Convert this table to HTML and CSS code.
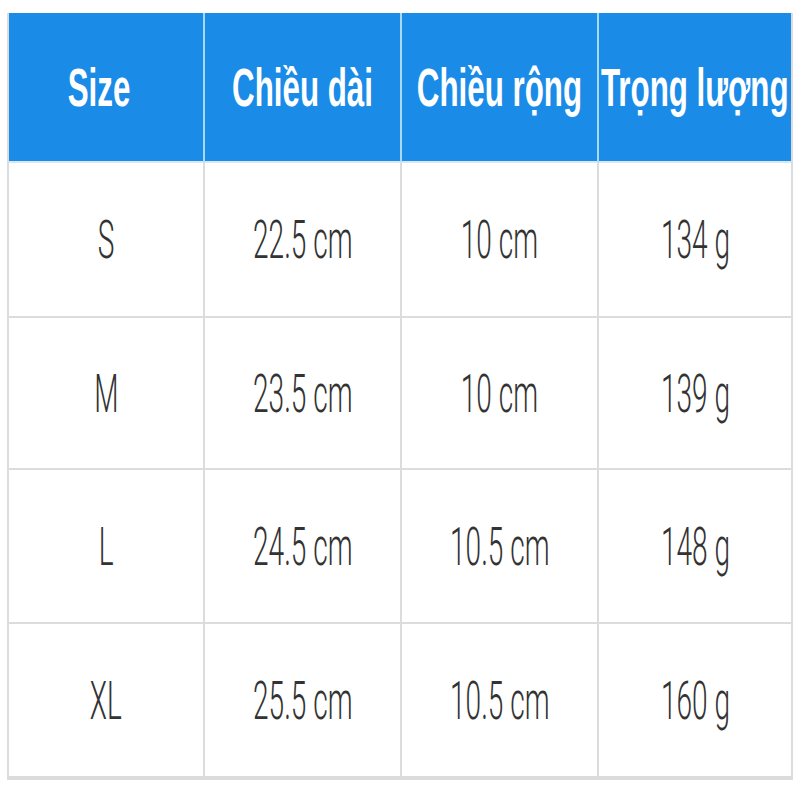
FILE: index.html
```html
<!DOCTYPE html>
<html lang="vi">
<head>
<meta charset="utf-8">
<title>Bảng size</title>
<link rel="stylesheet" href="styles.css">
</head>
<body>
<div class="size-table">
  <div class="cell head first"><span class="txt">Size</span></div>
  <div class="cell head"><span class="txt">Chiều dài</span></div>
  <div class="cell head"><span class="txt">Chiều rộng</span></div>
  <div class="cell head last"><span class="txt">Trọng lượng</span></div>

  <div class="cell"><span class="txt">S</span></div>
  <div class="cell"><span class="txt">22.5 cm</span></div>
  <div class="cell"><span class="txt">10 cm</span></div>
  <div class="cell last"><span class="txt">134 g</span></div>

  <div class="cell"><span class="txt">M</span></div>
  <div class="cell"><span class="txt">23.5 cm</span></div>
  <div class="cell"><span class="txt">10 cm</span></div>
  <div class="cell last"><span class="txt">139 g</span></div>

  <div class="cell"><span class="txt">L</span></div>
  <div class="cell"><span class="txt">24.5 cm</span></div>
  <div class="cell"><span class="txt">10.5 cm</span></div>
  <div class="cell last"><span class="txt">148 g</span></div>

  <div class="cell"><span class="txt">XL</span></div>
  <div class="cell"><span class="txt">25.5 cm</span></div>
  <div class="cell"><span class="txt">10.5 cm</span></div>
  <div class="cell last"><span class="txt">160 g</span></div>
</div>
</body>
</html>
```
FILE: styles.css
```css
html, body {
  margin: 0;
  padding: 0;
  background: #ffffff;
}

body {
  padding: 13px 7px 0 7px;
  font-family: "Liberation Sans", Arial, sans-serif;
}

.size-table {
  width: 786px;
  box-sizing: border-box;
  display: grid;
  grid-template-columns: 196px 197px 197px minmax(0, 1fr);
  grid-template-rows: 150px 155px 152px 154px 154px;
  border-left: 2px solid #dcdcdc;
  border-right: 2px solid #dcdcdc;
  border-bottom: 2px solid #dcdcdc;
}

.cell {
  min-width: 0;
  display: flex;
  align-items: center;
  justify-content: center;
  overflow: visible;
  border-right: 2px solid #dcdcdc;
  border-bottom: 2px solid #dcdcdc;
  color: #333333;
  font-family: Roboto, "Liberation Sans", Arial, sans-serif;
  font-size: 54px;
  font-weight: 300;
  white-space: nowrap;
}

.cell.last {
  border-right: none;
}

.cell.head {
  background: #1a8be6;
  color: #ffffff;
  font-family: "Liberation Sans", Arial, sans-serif;
  font-size: 54px;
  font-weight: 700;
  border-right: 2px solid #a8d9f7;
  border-bottom: 2px solid #d8e8f2;
}

.cell.head.first {
  padding-right: 14px;
}

.cell.head.last {
  border-right: none;
}

.txt {
  display: inline-block;
  transform: scaleX(0.52);
  transform-origin: center;
}

.head .txt {
  transform: scaleX(0.58);
}
```
